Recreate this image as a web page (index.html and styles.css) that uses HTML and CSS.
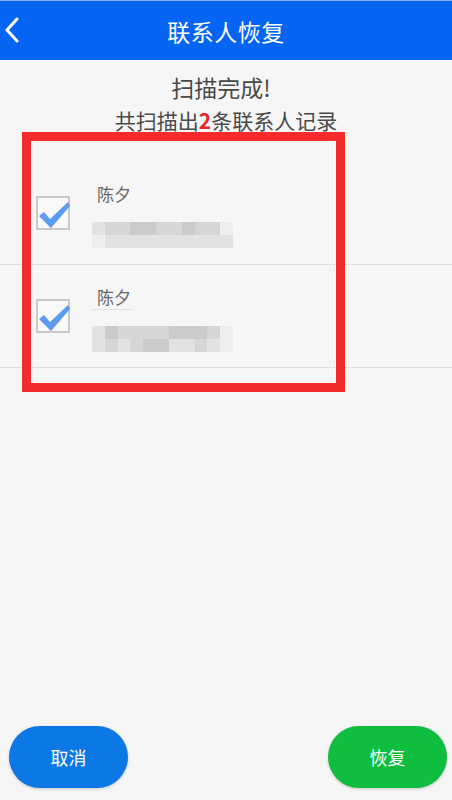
FILE: index.html
```html
<!DOCTYPE html>
<html lang="zh-CN">
<head>
  <meta charset="UTF-8">
  <title>联系人恢复</title>
  <link rel="stylesheet" href="styles.css">
</head>
<body>
  <div class="topbar">
    <svg class="back" width="16" height="26" viewBox="0 0 16 26">
      <path d="M13 2 L3 13 L13 24" fill="none" stroke="#fff" stroke-width="3" stroke-linecap="round" stroke-linejoin="round"/>
    </svg>
    <h1>联系人恢复</h1>
  </div>

  <div class="summary">
    <p class="done">扫描完成!</p>
    <p class="count">共扫描出<span class="num">2</span>条联系人记录</p>
  </div>

  <div class="list">
    <div class="row">
      <div class="check">
        <svg width="36" height="30" viewBox="0 0 36 30">
          <path d="M2 16 L7 12 L13 19 L31 2 L33 6 L14 28 Z" fill="#5b9cf0"/>
        </svg>
      </div>
      <div class="info">
        <div class="name">陈夕</div>
        <div class="phone">
          <span class="s3"></span><span class="s2"></span><span class="s2"></span><span class="s1"></span><span class="s1"></span><span class="s2"></span><span class="s2"></span><span class="s1"></span><span class="s2"></span><span class="s2"></span><span class="s4"></span>
          <span class="s4"></span><span class="s3"></span><span class="s3"></span><span class="s3"></span><span class="s3"></span><span class="s3"></span><span class="s3"></span><span class="s3"></span><span class="s3"></span><span class="s3"></span><span class="s3"></span>
        </div>
      </div>
    </div>
    <div class="row">
      <div class="check">
        <svg width="36" height="30" viewBox="0 0 36 30">
          <path d="M2 16 L7 12 L13 19 L31 2 L33 6 L14 28 Z" fill="#5b9cf0"/>
        </svg>
      </div>
      <div class="info">
        <div class="name underlined">陈夕</div>
        <div class="phone">
          <span class="s3"></span><span class="s1"></span><span class="s2"></span><span class="s2"></span><span class="s2"></span><span class="s2"></span><span class="s1"></span><span class="s1"></span><span class="s1"></span><span class="s2"></span><span class="s4"></span>
          <span class="s3"></span><span class="s2"></span><span class="s3"></span><span class="s2"></span><span class="s1"></span><span class="s1"></span><span class="s3"></span><span class="s3"></span><span class="s2"></span><span class="s3"></span><span class="s4"></span>
        </div>
      </div>
    </div>
  </div>

  <div class="mark"></div>

  <div class="actions">
    <button class="btn cancel">取消</button>
    <button class="btn restore">恢复</button>
  </div>
</body>
</html>
```

FILE: styles.css
```css
html, body {
  height: 100%;
}
body {
  margin: 0;
  font-family: "Noto Sans CJK SC", "Noto Sans", sans-serif;
  background: #f6f6f6;
  color: #555;
  display: flex;
  flex-direction: column;
  position: relative;
}
.topbar {
  height: 60px;
  background: #0564f1;
  border-top: 1px solid #7fb0f6;
  box-sizing: border-box;
  display: flex;
  align-items: center;
  justify-content: center;
  position: relative;
}
.back {
  position: absolute;
  left: 4px;
  top: 16px;
}
.topbar h1 {
  margin: 0;
  font-size: 23px;
  font-weight: 400;
  color: #fff;
  letter-spacing: 0.5px;
}
.summary {
  padding-top: 13px;
  text-align: center;
}
.summary p {
  margin: 0;
  line-height: 28px;
}
.done {
  font-size: 23px;
  color: #4a4a4a;
  padding-right: 10px;
}
.count {
  font-size: 21px;
  color: #4a4a4a;
  margin-top: 5px !important;
}
.num {
  color: #e82424;
  font-weight: 700;
}
.list {
  margin-top: 28px;
}
.row {
  height: 103px;
  box-sizing: border-box;
  border-bottom: 1px solid #dedede;
  display: flex;
  align-items: center;
  padding-left: 36px;
  gap: 27px;
}
.check {
  width: 34px;
  height: 34px;
  box-sizing: border-box;
  border: 2px solid #c9c9c9;
  background: #f9f9f9;
  position: relative;
  flex-shrink: 0;
}
.check svg {
  position: absolute;
  left: -1px;
  top: 2px;
}
.info {
  display: flex;
  flex-direction: column;
  margin-top: 4px;
}
.name {
  font-size: 17px;
  line-height: 24px;
  color: #666;
  align-self: flex-start;
}
.name.underlined {
  border-bottom: 1px solid #e2e2e2;
  padding-right: 3px;
  margin-left: -5px;
  padding-left: 5px;
}
.phone {
  margin-top: 16px;
  margin-left: -5px;
  width: 141px;
  display: grid;
  grid-template-columns: repeat(11, 1fr);
  grid-auto-rows: 13px;
}
.s1 { background: #cbcbcb; }
.s2 { background: #d6d6d6; }
.s3 { background: #e2e2e2; }
.s4 { background: #eeeeee; }
.mark {
  position: absolute;
  left: 22px;
  top: 132px;
  width: 323px;
  height: 260px;
  box-sizing: border-box;
  border: 9px solid #f42b2b;
  box-shadow: inset 0 0 0 1px #fff;
}
.actions {
  margin-top: auto;
  display: flex;
  justify-content: space-between;
  padding: 0 5px 12px 9px;
}
.btn {
  width: 119px;
  height: 62px;
  border: none;
  border-radius: 31px;
  font-family: inherit;
  font-size: 18px;
  color: #fff;
  box-shadow: 0 1px 3px rgba(0, 0, 0, 0.2);
}
.cancel {
  background: #0b78e6;
}
.restore {
  background: #0fbd3f;
}
```
